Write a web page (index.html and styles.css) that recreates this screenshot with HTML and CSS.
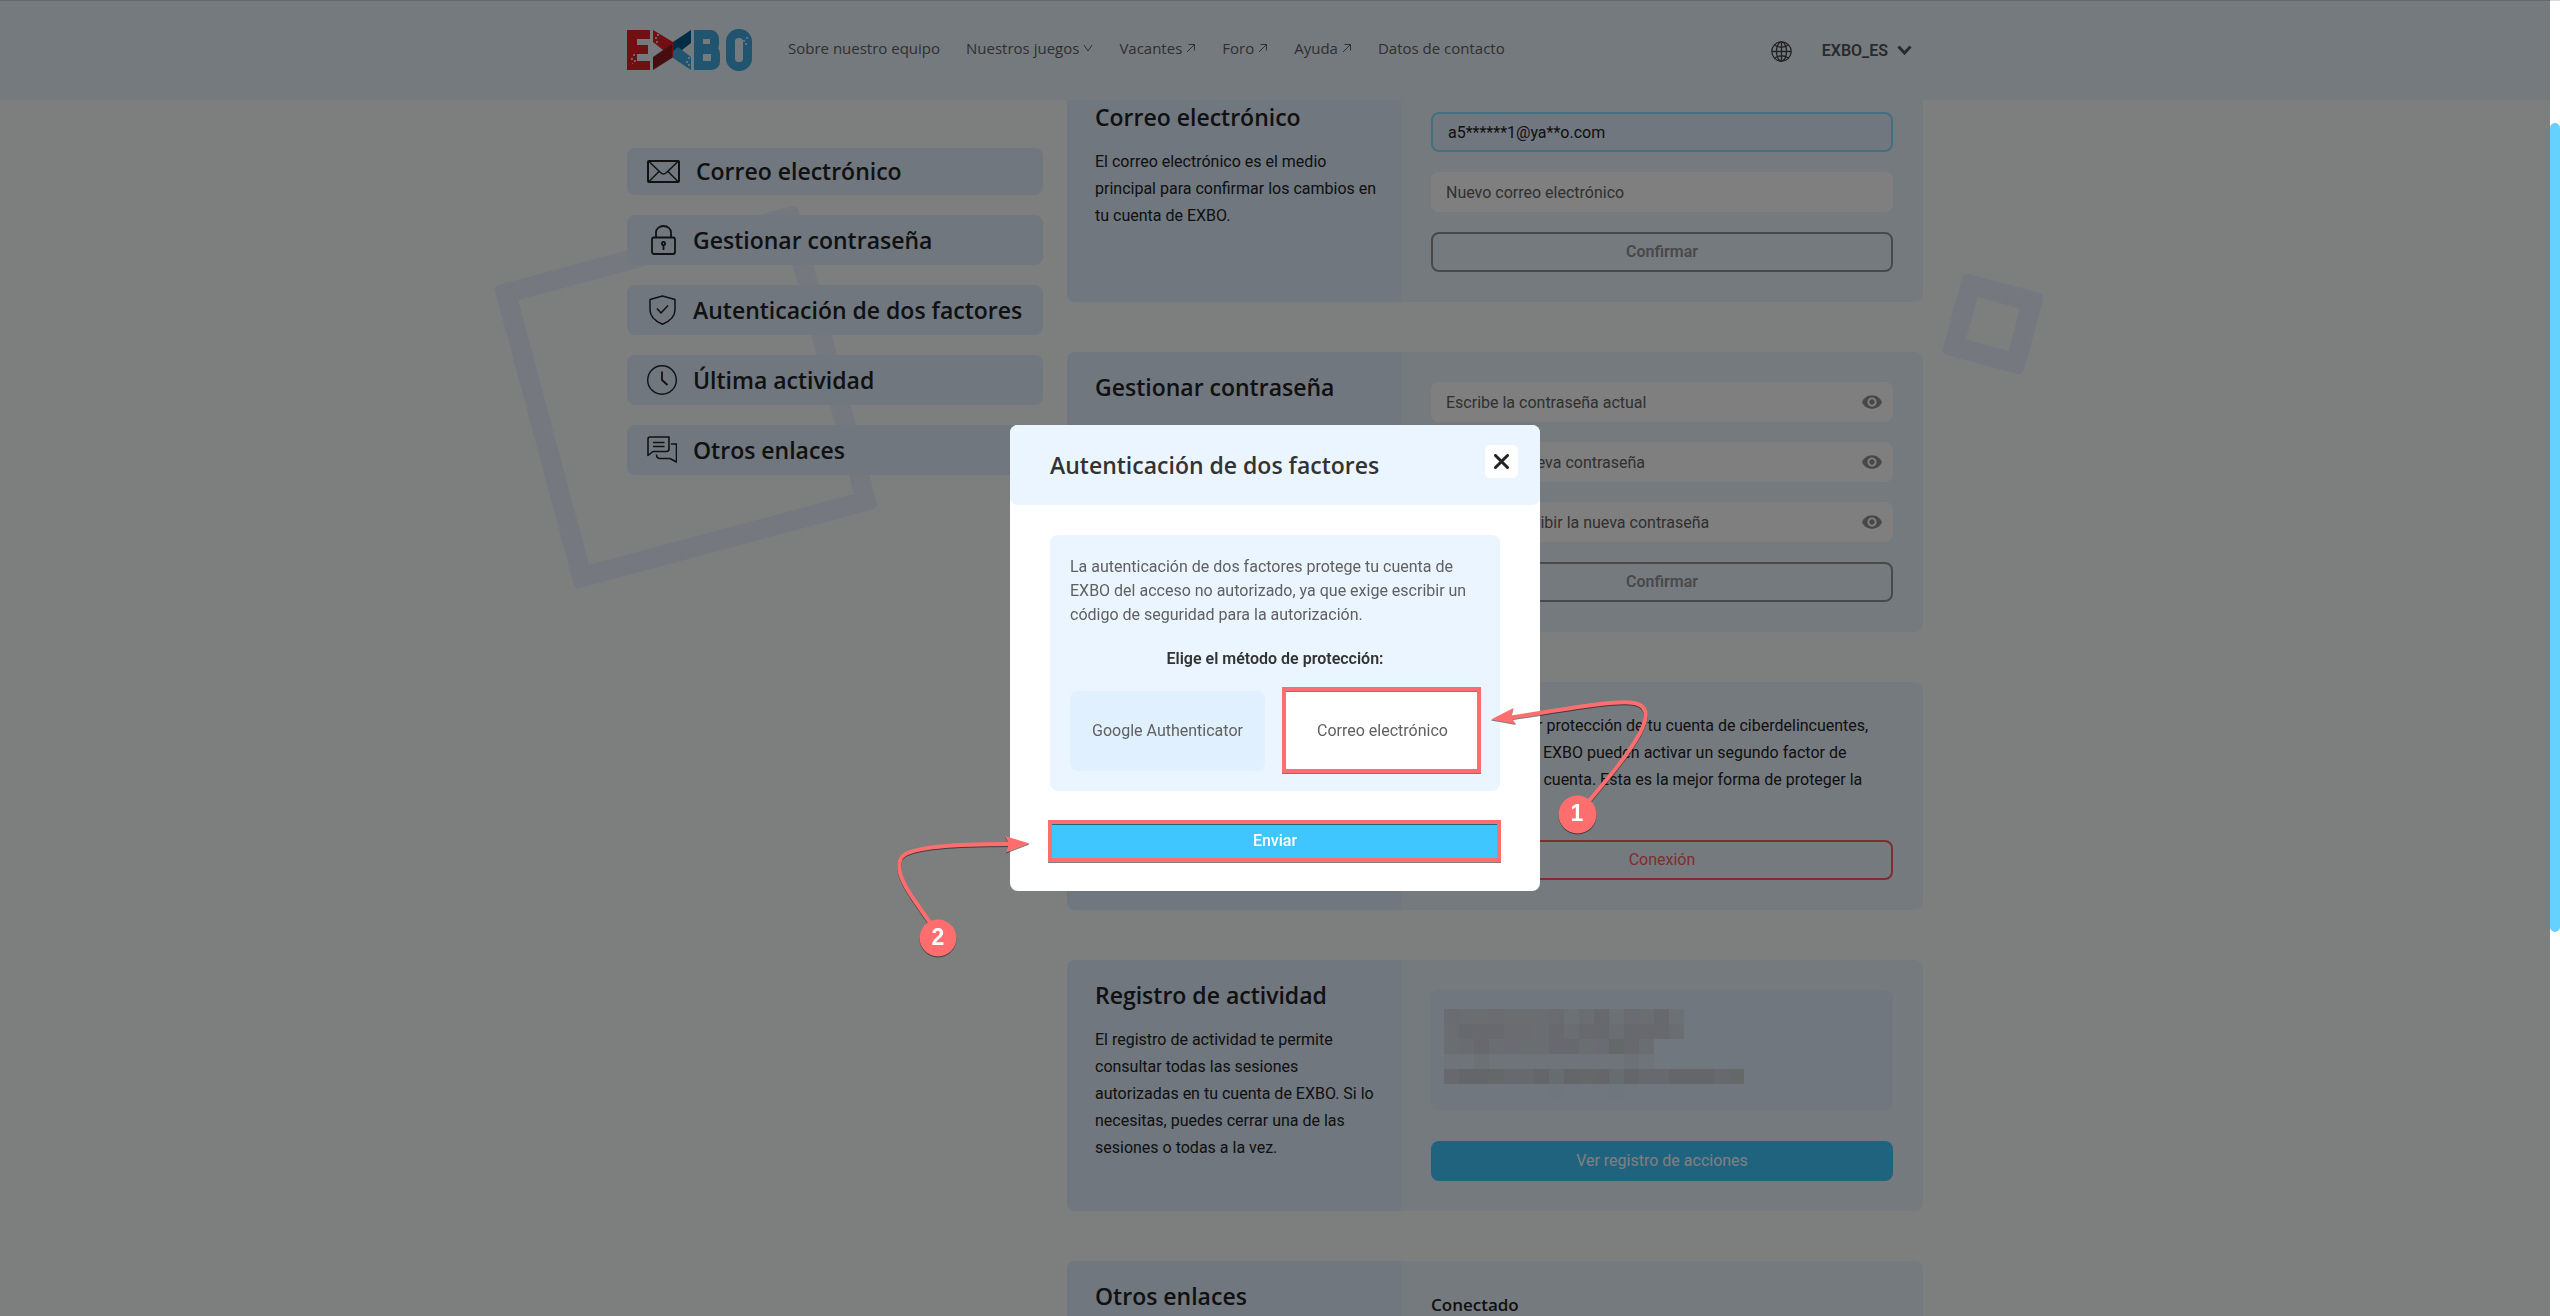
FILE: index.html
```
<!DOCTYPE html>
<html lang="es">
<head>
<meta charset="utf-8">
<meta name="viewport" content="width=device-width, initial-scale=1">
<title>EXBO – Configuración de la cuenta</title>
<link rel="stylesheet" href="styles.css">
</head>
<body>
<svg class="sprite" aria-hidden="true">
  <symbol id="ext" viewBox="0 0 10 10"><path d="M1 9 8.500 1.500M2.500 1.500H8.500V7.500" fill="none" stroke="currentColor"/></symbol>
  <symbol id="eye" viewBox="1 4.500 22 15"><path fill="currentColor" d="M12 4.500C7 4.500 2.730 7.610 1 12c1.730 4.390 6 7.500 11 7.500s9.270-3.110 11-7.500c-1.730-4.390-6-7.500-11-7.500zM12 17c-2.760 0-5-2.240-5-5s2.240-5 5-5 5 2.240 5 5-2.240 5-5 5zm0-8c-1.660 0-3 1.340-3 3s1.340 3 3 3 3-1.340 3-3-1.340-3-3-3z"/></symbol>
</svg>

<header class="header">
  <div class="container header-row">
    <a class="logo" href="#" aria-label="EXBO">
      <svg viewBox="0 0 125 42" width="125" height="42" aria-hidden="true">
        <g fill="#e51e25"><rect y="1" width="10" height="40"/><rect y="1" width="23" height="9"/><rect y="16" width="21" height="9"/><rect y="32" width="23" height="9"/></g>
        <path fill="#e51e25" d="M26 1 46 13V29L26 13Z"/>
        <path fill="#911b1f" d="M26 41V28L45 15V29Z"/>
        <path fill="#005a87" d="M64 1V14L46 28V13Z"/>
        <path fill="#40a8df" d="M64 41V28L51 18 46 22V29Z"/>
        <rect x="67" y="1" width="9" height="40" fill="#40a8df"/>
        <g fill="none" stroke="#40a8df" stroke-width="9"><rect x="71.500" y="5.500" width="16" height="14" rx="4"/><rect x="71.500" y="20.500" width="17" height="16" rx="4"/><rect x="103.500" y="4.500" width="17" height="33" rx="8"/></g>
        <g fill="#fff" opacity=".7"><rect x="6" y="25" width="2" height="2"/><rect x="4" y="29" width="2" height="2"/><rect x="7" y="31" width="2" height="2"/><rect x="5" y="34" width="1" height="1"/><rect x="30" y="5" width="2" height="2"/><rect x="28" y="8" width="2" height="2"/><rect x="29" y="12" width="2" height="2"/><rect x="61" y="28" width="2" height="2"/><rect x="59" y="32" width="2" height="2"/><rect x="61" y="35" width="2" height="2"/><rect x="119" y="8" width="2" height="2"/><rect x="116" y="11" width="2" height="2"/><rect x="118" y="14" width="2" height="2"/></g>
      </svg>
    </a>
    <nav class="nav">
      <a href="#">Sobre nuestro equipo</a>
      <a href="#">Nuestros juegos <svg class="ico" viewBox="0 0 10 10"><path d="M1 2 5 8 9 2" fill="none" stroke="currentColor"/></svg></a>
      <a href="#">Vacantes <svg class="ico"><use href="#ext"/></svg></a>
      <a href="#">Foro <svg class="ico"><use href="#ext"/></svg></a>
      <a href="#">Ayuda <svg class="ico"><use href="#ext"/></svg></a>
      <a href="#">Datos de contacto</a>
    </nav>
    <button class="plain globe" aria-label="Idioma">
      <svg viewBox="0 0 21 21" width="21" height="21" fill="none" stroke="currentColor" stroke-width="1.300"><circle cx="10.500" cy="10.500" r="9.700"/><ellipse cx="10.500" cy="10.500" rx="5" ry="9.700"/><path d="M10.500 1V20M1 10.500H20M3.500 4Q10.500 8.500 17.500 4M3.500 17Q10.500 12.500 17.500 17"/></svg>
    </button>
    <button class="plain user">EXBO_ES <svg viewBox="0 0 15 10" width="15" height="10"><path d="M1.500 1.500 7.500 8 13.500 1.500" fill="none" stroke="currentColor" stroke-width="3"/></svg></button>
  </div>
</header>

<main class="container page">
  <div class="decor decor-big"></div>
  <div class="decor decor-small"></div>
  <aside class="side">
    <a class="side-link" href="#correo"><svg viewBox="0 0 33 23" width="33" height="23"><g fill="none" stroke="currentColor" stroke-width="2" stroke-linejoin="round"><rect x="1" y="1" width="31" height="21" rx="1"/><path stroke-width="1.500" d="M2 1.500 13.500 12.500Q16.500 15.500 19.500 12.500L31 1.500M2 21.500 12 11.500M31 21.500 21 11.500"/></g></svg>Correo electrónico</a>
    <a class="side-link" href="#clave"><svg viewBox="0 0 30 30" width="30" height="30"><g fill="none" stroke="currentColor" stroke-width="1.800"><rect x="5" y="12.500" width="23" height="16.500" rx="2"/><path d="M9 12V7.500a7.500 6.500 0 0 1 15 0V12"/><circle cx="16.500" cy="18.500" r="1.600"/><path d="M16.500 20.500V25"/></g></svg>Gestionar contraseña</a>
    <a class="side-link" href="#factores"><svg viewBox="0 0 30 30" width="30" height="30"><g fill="none" stroke="currentColor" stroke-width="1.500" stroke-linejoin="round"><path d="M15.500 1 28 4.500V15C28 22 22 26.500 15.500 29.300 9 26.500 3 22 3 15V4.500Z"/><path d="M10 13.500 14 18 21 10.500"/></g></svg>Autenticación de dos factores</a>
    <a class="side-link" href="#actividad"><svg viewBox="0 0 30 30" width="30" height="30"><g fill="none" stroke="currentColor" stroke-width="1.400"><circle cx="15" cy="15" r="14.300"/><path stroke-width="1.800" d="M15 6.500V15L20.500 20"/></g></svg>Última actividad</a>
    <a class="side-link" href="#enlaces"><svg viewBox="0 0 30 30" width="30" height="30"><g fill="none" stroke="currentColor" stroke-width="1.600" stroke-linejoin="round"><path d="M1 20.500V4Q1 2 3 2H22V14Q22 16.500 19.500 16.500H6ZM6 7.500H17.500M6 11.500H17.500"/><path d="M24 9H29.500V27L23 23.500H13Q9.500 23.500 9.500 19.500"/></g></svg>Otros enlaces</a>
  </aside>

  <div class="cards">
    <section class="card" id="correo">
      <div class="card-info">
        <h2>Correo electrónico</h2>
        <p>El correo electrónico es el medio<br>principal para confirmar los cambios en<br>tu cuenta de EXBO.</p>
      </div>
      <form class="card-body">
        <input class="field field-current" type="text" value="a5******1@ya**o.com" aria-label="Correo actual" readonly>
        <input class="field" type="email" placeholder="Nuevo correo electrónico" aria-label="Nuevo correo electrónico">
        <button class="btn btn-gray" type="button">Confirmar</button>
      </form>
    </section>

    <section class="card" id="clave">
      <div class="card-info"><h2>Gestionar contraseña</h2></div>
      <form class="card-body">
        <label class="password"><input class="field" type="password" placeholder="Escribe la contraseña actual" aria-label="Contraseña actual"><svg class="eye"><use href="#eye"/></svg></label>
        <label class="password"><input class="field" type="password" placeholder="Escribe la nueva contraseña" aria-label="Nueva contraseña"><svg class="eye"><use href="#eye"/></svg></label>
        <label class="password"><input class="field" type="password" placeholder="Vuelve a escribir la nueva contraseña" aria-label="Repetir la nueva contraseña"><svg class="eye"><use href="#eye"/></svg></label>
        <button class="btn btn-gray" type="button">Confirmar</button>
      </form>
    </section>

    <section class="card" id="factores">
      <div class="card-info"><h2>Autenticación de dos factores</h2></div>
      <div class="card-body">
        <p>Para una mayor protección de tu cuenta de ciberdelincuentes,<br>los usuarios de EXBO pueden activar un segundo factor de<br>seguridad en la cuenta. Esta es la mejor forma de proteger la<br>cuenta.</p>
        <button class="btn btn-red" type="button">Conexión</button>
      </div>
    </section>

    <section class="card" id="actividad">
      <div class="card-info">
        <h2>Registro de actividad</h2>
        <p>El registro de actividad te permite<br>consultar todas las sesiones<br>autorizadas en tu cuenta de EXBO. Si lo<br>necesitas, puedes cerrar una de las<br>sesiones o todas a la vez.</p>
      </div>
      <div class="card-body card-body-wide">
        <div class="session">
          <svg viewBox="0 0 20 6" width="300" height="90" shape-rendering="crispEdges" aria-hidden="true">
            <g fill="#d4dce3"><path d="M0 0H16V2H0ZM0 2H14V3H0Z"/></g>
            <g fill="#dce8f3"><path d="M0 3H14V4H0Z"/></g>
            <g fill="#dfecfb"><path d="M7 5H8V6H7ZM11 5H12V6H11Z"/></g>
            <g fill="#d6e2ea"><path d="M2 3H3V4H2ZM12 3H13V4H12ZM8 0H9V1H8ZM11 0H12V1H11ZM15 0H16V1H15Z"/></g>
            <g fill="#d4d8e2"><path d="M0 0H1V1H0ZM3 0H4V1H3ZM7 0H8V1H7ZM12 0H13V1H12ZM4 1H6V2H4ZM1 2H2V3H1ZM4 2H5V3H4ZM10 2H11V3H10Z"/></g>
            <g fill="#ced2dc"><path d="M10 0H11V1H10ZM14 0H15V1H14ZM1 1H4V2H1ZM7 1H8V2H7ZM9 1H11V2H9ZM12 1H15V2H12ZM2 2H3V3H2ZM7 2H9V3H7ZM12 2H13V3H12ZM0 4H20V5H0Z"/></g>
            <g fill="#c8ccd4"><path d="M1 4H3V5H1ZM6 4H7V5H6ZM8 4H11V5H8ZM12 4H13V5H12ZM15 4H18V5H15Z"/></g>
            <g fill="#cad0d2"><path d="M11 2H12V3H11ZM3 4H4V5H3ZM9 4H10V5H9ZM19 4H20V5H19Z"/></g>
            <g fill="#ccd8e0"><path d="M7 4H8V5H7ZM11 4H12V5H11Z"/></g>
          </svg>
        </div>
        <button class="btn btn-blue" type="button">Ver registro de acciones</button>
      </div>
    </section>

    <section class="card" id="enlaces">
      <div class="card-info"><h2>Otros enlaces</h2></div>
      <div class="card-body"><h3>Conectado</h3></div>
    </section>
  </div>
</main>

<div class="overlay">
  <div class="modal" role="dialog" aria-labelledby="modal-title">
    <div class="modal-head">
      <h2 id="modal-title">Autenticación de dos factores</h2>
      <button class="close" aria-label="Cerrar"><svg viewBox="0 0 15 15" width="15" height="15"><path d="M1.500 1.500 13.500 13.500M13.500 1.500 1.500 13.500" stroke="currentColor" stroke-width="3" stroke-linecap="round"/></svg></button>
    </div>
    <div class="modal-body">
      <div class="method">
        <p>La autenticación de dos factores protege tu cuenta de<br>EXBO del acceso no autorizado, ya que exige escribir un<br>código de seguridad para la autorización.</p>
        <strong>Elige el método de protección:</strong>
        <div class="options">
          <button class="option" aria-pressed="false">Google Authenticator</button>
          <button class="option option-on" aria-pressed="true">Correo electrónico</button>
        </div>
      </div>
      <button class="btn btn-blue send">Enviar</button>
    </div>
    <!-- Step markers drawn over the dialog -->
    <svg class="steps" viewBox="880 680 790 290" width="790" height="290" fill="none">
      <g class="mark-shadow">
        <g stroke="#ff6e6e" stroke-width="4">
          <rect x="1284" y="689" width="195" height="82"/>
          <rect x="1050" y="822" width="449" height="38"/>
          <path d="M1511 717.500C1570 708 1612 701 1630 702.500 1650 704 1648 717 1640 733 1628 755 1610 776 1588 802"/>
          <path d="M1010 844C955 844 915 847 904 855 896 861 899 875 906 887 913 899 922 911 931 924"/>
        </g>
        <g fill="#ff6e6e">
          <path d="M1491 719.500 1513.500 708 1511 717.500 1516 724Z"/>
          <path d="M1029.500 843.500 1005 836 1009 844 1006 852.500Z"/>
          <circle cx="1577.500" cy="814.500" r="19"/>
          <circle cx="938" cy="938" r="18.500"/>
        </g>
      </g>
      <g class="mark-num"><text x="1577" y="821">1</text><text x="938" y="945">2</text></g>
    </svg>
  </div>
</div>

<div class="scrollbar" aria-hidden="true"><div class="scrollbar-thumb"></div></div>
</body>
</html>
```
FILE: styles.css
```
* { box-sizing: border-box; }
html { height: 100%; overflow: hidden; }
body {
  margin: 0;
  height: 100%;
  padding-right: 10px;
  overflow: hidden;
  background: #f8fffd;
  color: #222;
  font: 16px/27px Roboto, sans-serif;
}
h2, h3, p { margin: 0; }
h2, h3, .side-link, .nav { font-family: "Open Sans", sans-serif; }
h2 { font-size: 23px; font-weight: 600; line-height: 27px; }
h3 { font-size: 17px; font-weight: 600; line-height: 27px; }
a { color: inherit; text-decoration: none; }
button, input { font: inherit; color: inherit; }
.sprite { position: absolute; width: 0; height: 0; }
.container { width: 100%; max-width: 1296px; margin: 0 auto; }

/* Header */
.header {
  position: fixed;
  z-index: 2;
  top: 0;
  left: 0;
  right: 10px;
  background: #ebf5ff;
}
.header-row { display: flex; align-items: center; height: 100px; }
.logo { display: flex; margin-right: 36px; }
.nav { display: flex; gap: 26px; flex: 1; font-size: 15px; line-height: 20px; color: #606060; padding-bottom: 4px; }
.nav a { display: flex; align-items: center; gap: 4px; white-space: nowrap; }
.ico { width: 10px; height: 10px; }
.plain { border: 0; padding: 0; background: none; color: #555; display: flex; align-items: center; }
.globe { margin-right: 30px; color: #444; padding-top: 2px; }
.user { gap: 9px; margin-right: 11px; font-weight: 600; }

/* Page */
.page { position: relative; display: grid; grid-template-columns: 416px 1fr; gap: 24px; padding-top: 82px; }
.decor { position: absolute; z-index: -1; border: 20px solid #ebf3ff; border-radius: 5px; }
.decor-big { width: 314px; height: 314px; left: -98px; top: 240px; transform: rotate(-15deg); }
.decor-small { width: 84px; height: 84px; right: -112px; top: 282px; transform: rotate(15deg); }

.side { display: flex; flex-direction: column; gap: 20px; margin-top: 66px; align-self: start; }
.side-link {
  display: flex;
  align-items: center;
  gap: 16px;
  padding: 10px 20px;
  border-radius: 8px;
  background: #e1eeff;
  font-size: 23px;
  font-weight: 600;
}

.cards { display: flex; flex-direction: column; gap: 50px; }
.card { display: grid; grid-template-columns: 334px 1fr; border-radius: 8px; overflow: hidden; background: #ebf5ff; }
.card-info { display: flex; flex-direction: column; gap: 17px; padding: 22px 8px 22px 28px; background: #e1eeff; }
.card-body { display: flex; flex-direction: column; gap: 20px; padding: 30px; white-space: nowrap; }
.card-body-wide { gap: 30px; }

.field { display: block; width: 100%; height: 40px; padding: 0 15px; border: 0; border-radius: 8px; background: #fff; color: #222; }
.field::placeholder { color: #606060; opacity: 1; }
.field-current { border: 2px solid #88dfff; background: #e1eeff; }
.password { position: relative; display: block; }
.eye { position: absolute; right: 11px; top: 13px; width: 20px; height: 14px; color: #909090; }

.btn { height: 40px; padding: 0; border: 2px solid; border-radius: 8px; background: none; line-height: 24px; }
.btn-gray { color: #929292; font-weight: 600; }
.btn-red { color: #ff5a5e; }
.btn-blue { border: 0; background: #40c6ff; color: #fff; }
.session { padding: 19px 13px 12px; border-radius: 8px; background: #e1eeff; }
.session svg { display: block; }

/* Dialog */
.overlay {
  position: fixed;
  z-index: 3;
  inset: 0 10px 0 0;
  display: flex;
  align-items: center;
  justify-content: center;
  background: rgba(0, 0, 0, .5);
}
.modal { position: relative; width: 530px; border-radius: 8px; background: #fff; color: #333; }
.modal-head { display: flex; justify-content: space-between; align-items: flex-start; padding: 20px 22px 20px 40px; border-radius: 8px; background: #ebf5ff; }
.modal-head h2 { line-height: 40px; }
.close { display: flex; align-items: center; justify-content: center; width: 33px; height: 33px; padding: 0; border: 0; border-radius: 5px; background: #fff; color: #222; }
.modal-body { display: flex; flex-direction: column; gap: 30px; padding: 30px 40px; }
.method { display: flex; flex-direction: column; gap: 20px; padding: 20px; border-radius: 8px; background: #ebf5ff; line-height: 24px; color: #606060; white-space: nowrap; }
.method strong { font-weight: 600; text-align: center; color: #333; }
.options { display: grid; grid-template-columns: 1fr 1fr; gap: 20px; }
.option { height: 80px; padding: 0; border: 0; border-radius: 8px; background: #e1f0ff; color: #606060; }
.option-on { background: #fff; }
.send { font-weight: 500; }

.steps { position: absolute; left: -130px; top: 255px; pointer-events: none; }
.mark-shadow { filter: drop-shadow(0 1px 0 rgba(0, 0, 0, .5)); }
.mark-num { fill: #fff; font: bold 23px "Liberation Sans", sans-serif; text-anchor: middle; }

.scrollbar { position: fixed; z-index: 3; top: 0; right: 0; bottom: 0; width: 10px; padding-top: 123px; background: #fff; }
.scrollbar-thumb { height: 67.8%; border-radius: 5px; background: #66d1ff; }
body::after { content: ""; position: fixed; z-index: 4; inset: 0 0 auto; height: 1px; background: rgba(0, 0, 0, .14); }
```
